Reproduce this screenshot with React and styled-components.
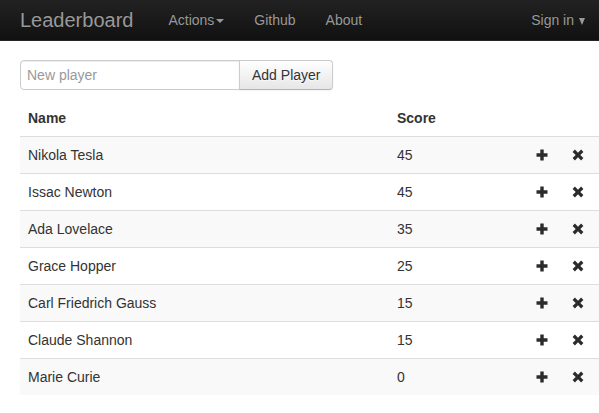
import React from 'react';
import styled, { createGlobalStyle } from 'styled-components';

const GlobalStyle = createGlobalStyle`
  html, body {
    margin: 0;
    padding: 0;
    background: #fff;
  }
  body {
    font-family: "Liberation Sans", Arial, Helvetica, sans-serif;
    font-size: 14px;
    line-height: 20px;
    color: #333;
  }
  * { box-sizing: border-box; }
`;

const players = [
  { id: 1, name: 'Nikola Tesla', score: 45 },
  { id: 2, name: 'Issac Newton', score: 45 },
  { id: 3, name: 'Ada Lovelace', score: 35 },
  { id: 4, name: 'Grace Hopper', score: 25 },
  { id: 5, name: 'Carl Friedrich Gauss', score: 15 },
  { id: 6, name: 'Claude Shannon', score: 15 },
  { id: 7, name: 'Marie Curie', score: 0 },
];

const Navbar = styled.div`
  height: 41px;
  display: flex;
  align-items: center;
  padding: 0 14px 0 20px;
  background-image: linear-gradient(to bottom, #222222, #111111);
  border-bottom: 1px solid #252525;
  box-shadow: 0 1px 0 rgba(255, 255, 255, 0.06);
`;

const Brand = styled.a`
  font-size: 20px;
  line-height: 20px;
  color: #999;
  text-decoration: none;
  margin-right: 20px;
  text-shadow: 0 -1px 0 rgba(0, 0, 0, 0.25);
`;

const Nav = styled.ul`
  display: flex;
  list-style: none;
  margin: 0;
  padding: 0;
  flex: 1;
`;

const NavItem = styled.li`
  padding: 0 15px;
  color: #999;
  font-size: 14px;
  display: flex;
  align-items: center;
  text-shadow: 0 -1px 0 rgba(0, 0, 0, 0.25);
  margin-left: ${(p) => (p.$right ? 'auto' : '0')};
  padding-right: ${(p) => (p.$right ? '0' : '15px')};
`;

const Caret = styled.span`
  display: inline-block;
  width: 0;
  height: 0;
  margin-left: 2px;
  margin-top: 1px;
  border-top: 4px solid #999;
  border-left: 4px solid transparent;
  border-right: 4px solid transparent;
`;

const DownArrow = styled.span`
  display: inline-block;
  width: 0;
  height: 0;
  margin-left: 5px;
  margin-top: 2px;
  border-top: 7px solid #999;
  border-left: 3.5px solid transparent;
  border-right: 3.5px solid transparent;
`;

const Content = styled.div`
  padding: 19px 0 0 20px;
`;

const Form = styled.form`
  display: flex;
  margin: 0 0 10px 0;
`;

const Input = styled.input`
  width: 220px;
  height: 30px;
  padding: 4px 6px;
  font-family: inherit;
  font-size: 14px;
  color: #555;
  border: 1px solid #ccc;
  border-radius: 4px 0 0 4px;
  box-shadow: inset 0 1px 1px rgba(0, 0, 0, 0.075);
  outline: none;
  &::placeholder {
    color: #999;
  }
`;

const Button = styled.button`
  height: 30px;
  padding: 4px 12px;
  margin-left: -1px;
  font-family: inherit;
  font-size: 14px;
  line-height: 20px;
  color: #333;
  text-shadow: 0 1px 1px rgba(255, 255, 255, 0.75);
  background-image: linear-gradient(to bottom, #ffffff, #e6e6e6);
  border: 1px solid #ccc;
  border-bottom-color: #b3b3b3;
  border-radius: 0 4px 4px 0;
  box-shadow: inset 0 1px 0 rgba(255, 255, 255, 0.2), 0 1px 2px rgba(0, 0, 0, 0.05);
`;

const Table = styled.table`
  width: 579px;
  border-collapse: collapse;
  border-spacing: 0;
  table-layout: fixed;
`;

const Th = styled.th`
  padding: 8px;
  text-align: left;
  font-weight: bold;
  line-height: 20px;
`;

const Row = styled.tr`
  background: ${(p) => (p.$striped ? '#f9f9f9' : '#fff')};
`;

const Td = styled.td`
  padding: 8px;
  line-height: 20px;
  border-top: 1px solid #ddd;
  vertical-align: top;
`;

const IconCell = styled(Td)`
  padding: 8px 0 8px 8px;
`;

const Icon = styled.svg`
  display: block;
  width: 14px;
  height: 14px;
  margin-top: 3px;
`;

const PlusIcon = () => (
  <Icon viewBox="0 0 14 14">
    <path d="M5.3 1.5h3.4v3.8h3.8v3.4H8.7v3.8H5.3V8.7H1.5V5.3h3.8z" fill="#2b2b2b" />
  </Icon>
);

const RemoveIcon = () => (
  <Icon viewBox="0 0 14 14">
    <path
      d="M3.9 1.6L7 4.7l3.1-3.1 2.3 2.3L9.3 7l3.1 3.1-2.3 2.3L7 9.3l-3.1 3.1-2.3-2.3L4.7 7 1.6 3.9z"
      fill="#2b2b2b"
    />
  </Icon>
);

const App = () => (
  <>
    <GlobalStyle />
    <Navbar>
      <Brand href="#">Leaderboard</Brand>
      <Nav>
        <NavItem>
          Actions<Caret />
        </NavItem>
        <NavItem>Github</NavItem>
        <NavItem>About</NavItem>
        <NavItem $right>
          Sign in<DownArrow />
        </NavItem>
      </Nav>
    </Navbar>
    <Content>
      <Form onSubmit={(e) => e.preventDefault()}>
        <Input placeholder="New player" />
        <Button type="submit">Add Player</Button>
      </Form>
      <Table>
        <colgroup>
          <col style={{ width: 369 }} />
          <col style={{ width: 138 }} />
          <col style={{ width: 36 }} />
          <col style={{ width: 36 }} />
        </colgroup>
        <thead>
          <tr>
            <Th>Name</Th>
            <Th>Score</Th>
            <Th />
            <Th />
          </tr>
        </thead>
        <tbody>
          {players.map((p, i) => (
            <Row key={p.id} $striped={i % 2 === 0}>
              <Td>{p.name}</Td>
              <Td>{p.score}</Td>
              <IconCell>
                <PlusIcon />
              </IconCell>
              <IconCell>
                <RemoveIcon />
              </IconCell>
            </Row>
          ))}
        </tbody>
      </Table>
    </Content>
  </>
);

export default App;
